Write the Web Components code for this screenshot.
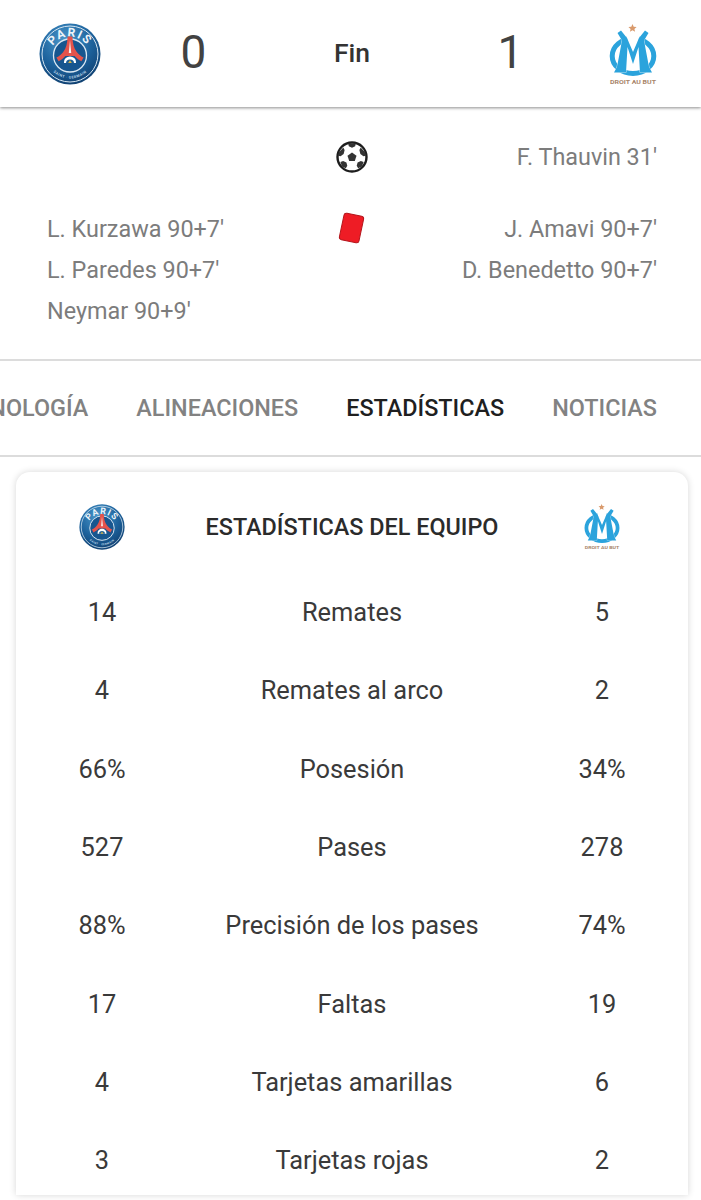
<!DOCTYPE html>
<html lang="es">
<head>
<meta charset="utf-8">
<title>PSG - OM</title>
<style>
	html, body { margin: 0; padding: 0; background: #fff; }
	body { width: 701px; height: 1200px; overflow: hidden; font-family: Roboto, "Liberation Sans", sans-serif; }
</style>
</head>
<body>
<match-page></match-page>

<script>
class PsgLogo extends HTMLElement {
	connectedCallback() {
		const size = this.getAttribute("size") || 62;
		this.attachShadow({ mode: "open" }).innerHTML = `
		<style>:host { display: block; width: ${size}px; height: ${size}px; } svg { display: block; }</style>
		<svg width="${size}" height="${size}" viewBox="0 0 62 62">
			<defs>
				<radialGradient id="b" cx="42%" cy="28%" r="80%">
					<stop offset="0" stop-color="#4a98cc"/>
					<stop offset="0.55" stop-color="#1d629c"/>
					<stop offset="1" stop-color="#0e3a69"/>
				</radialGradient>
				<path id="top" d="M10.500 34 A20.500 20.500 0 0 1 51.500 34"/>
				<path id="bottom" d="M7 36 A24.500 24.500 0 0 0 55 36"/>
			</defs>
			<circle cx="31" cy="31" r="30.500" fill="url(#b)"/>
			<circle cx="31" cy="31" r="28" fill="none" stroke="#d6e6f2" stroke-width="1"/>
			<text font-family="Roboto, sans-serif" font-weight="700" font-size="12" fill="#eef4f9" letter-spacing="1.500"><textPath href="#top" startOffset="50%" text-anchor="middle">PARIS</textPath></text>
			<text font-family="Roboto, sans-serif" font-weight="700" font-size="3.600" fill="#bcd6e8" letter-spacing=".5"><textPath href="#bottom" startOffset="50%" text-anchor="middle">SAINT · GERMAIN</textPath></text>
			<circle cx="31" cy="32.500" r="16.500" fill="#17568f" stroke="#dbe8f3" stroke-width="1.300"/>
			<path d="M28.600 13.500 h4.800 c.2 6.500 1.400 11.500 4.200 15.200 c1.800 2.400 4.200 4.400 7 5.800 l-2.200 3.800 c-2.600-1.200-5-3-6.800-5.200 h-9.200 c-1.800 2.200-4.200 4-6.800 5.200 l-2.200-3.800 c2.800-1.400 5.200-3.400 7-5.800 c2.800-3.700 4-8.700 4.200-15.200z" fill="#e4534b"/>
			<path d="M31 17 l1.200 13 h-2.400z" fill="#f4f4f4"/>
			<path d="M25 39 a6 5.500 0 0 1 12 0 v1 h-12z" fill="#fff"/>
			<path d="M27 40 a4 3.600 0 0 1 8 0 z" fill="#1c5f98"/>
			<path d="M31 37.200 l1.900 2.800 h-3.800z" fill="#d8b23f"/>
		</svg>`;
	}
}

class OmLogo extends HTMLElement {
	connectedCallback() {
		const width = this.getAttribute("width") || 48;
		const height = this.getAttribute("height") || 62;
		this.attachShadow({ mode: "open" }).innerHTML = `
		<style>:host { display: block; width: ${width}px; height: ${height}px; } svg { display: block; }</style>
		<svg width="${width}" height="${height}" viewBox="0 0 48 62">
			<path d="M23.500 1 l1.200 2.700 2.900.3 -2.200 1.900 .7 2.900 -2.600-1.500 -2.600 1.500 .7-2.900 -2.200-1.900 2.900-.3z" fill="#d99a6c"/>
			<ellipse cx="24" cy="33" rx="20.800" ry="17.500" fill="none" stroke="#2ba3dc" stroke-width="5"/>
			<path d="M18 11.500 H30 V15 L24 31 L18 15z" fill="#fff"/>
			<path d="M8.500 10 L12 7.500 L18 15 L24 29 L30 15 L36 7.500 L39.500 10 L35 17.500 L40 44 L43 49.500 H31 L29.500 24 L24 41 L18.500 24 L17 49.500 H5 L8 44 L13 17.500z" fill="#2ba3dc" stroke="#fff" stroke-width=".7" paint-order="stroke"/>
			<text x="24" y="60.500" text-anchor="middle" font-family="Roboto, sans-serif" font-weight="700" font-size="5.800" fill="#a8856a" textLength="46" lengthAdjust="spacingAndGlyphs">DROIT AU BUT</text>
		</svg>`;
	}
}

class SoccerBall extends HTMLElement {
	connectedCallback() {
		this.attachShadow({ mode: "open" }).innerHTML = `
		<style>:host { display: block; width: 32px; height: 32px; flex: none; } svg { display: block; }</style>
		<svg width="32" height="32" viewBox="0 0 32 32">
			<circle cx="16" cy="16" r="14.500" fill="#fff" stroke="#1d1d1d" stroke-width="2.400"/>
			<g fill="#333">
				<path d="M16 11.500 l4.500 3.200 -1.700 5.300 h-5.600 l-1.700-5.300z"/>
				<path d="M12.200 2.500 h7.600 l-.6 2.700 -3.200 1.600 -3.200-1.600z"/>
				<path d="M2.800 11.500 l4.500-5 1.300 2.600 -1 3.800 -3 2.400 -2.600-.5z"/>
				<path d="M29.200 11.500 l-4.500-5 -1.300 2.600 1 3.800 3 2.400 2.600-.5z"/>
				<path d="M6 25.500 l-1.600-4.500 2.700-1 3.300 1.400 .9 3.300 -1.500 2.600z"/>
				<path d="M26 25.500 l1.600-4.500 -2.700-1 -3.300 1.400 -.9 3.300 1.500 2.600z"/>
			</g>
		</svg>`;
	}
}

class RedCard extends HTMLElement {
	connectedCallback() {
		this.attachShadow({ mode: "open" }).innerHTML = `
		<style>
			:host { display: block; width: 32px; height: 28px; margin-top: -3px; margin-left: -1px; flex: none; }
			div {
				width: 21px; height: 28px; margin: 0 5.500px;
				box-sizing: border-box;
				background: #ee1c25;
				border: 1px solid #b5161c;
				border-radius: 3px;
				transform: rotate(12deg);
			}
		</style>
		<div></div>`;
	}
}

class ScoreHeader extends HTMLElement {
	constructor() {
		super();
		this.attachShadow({ mode: "open" }).innerHTML = `
		<style>
			:host {
				display: grid;
				grid-template-columns: 141px 105px 212px 105px 1fr;
				align-items: center;
				position: relative;
				height: 107px;
				background: #fff;
				box-shadow: 0 1px 3px rgba(0, 0, 0, .45);
			}
			.home { padding-left: 39px; }
			.away { padding-left: 46px; }
			.score { text-align: center; font-size: 46px; font-weight: 400; color: #424242; margin-top: -3px; }
			.status { text-align: center; font-size: 26.500px; font-weight: 500; color: #333; margin-top: -3px; }
		</style>
		<div class="home"><psg-logo></psg-logo></div>
		<div class="score">0</div>
		<div class="status">Fin</div>
		<div class="score">1</div>
		<div class="away"><om-logo></om-logo></div>`;
	}
}

class EventRow extends HTMLElement {
	constructor() {
		super();
		this.attachShadow({ mode: "open" }).innerHTML = `
		<style>
			:host {
				display: grid;
				grid-template-columns: 1fr 32px 1fr;
				column-gap: 16px;
				padding: 0 44px 0 47px;
			}
			.side { display: flex; flex-direction: column; gap: 13px; font-size: 23.400px; line-height: 28px; color: #7c7c7c; }
			.away { text-align: right; }
			.icon { display: flex; justify-content: center; align-items: center; height: 28px; }
		</style>
		<div class="side"><slot name="home"></slot></div>
		<div class="icon"><slot name="icon"></slot></div>
		<div class="side away"><slot name="away"></slot></div>`;
	}
}

class MatchTabs extends HTMLElement {
	constructor() {
		super();
		this.attachShadow({ mode: "open" }).innerHTML = `
		<style>
			:host {
				display: flex;
				justify-content: flex-end;
				align-items: center;
				gap: 48px;
				height: 94px;
				padding-right: 44px;
				overflow: hidden;
				border-top: 2px solid #dcdcdc;
				border-bottom: 2px solid #dcdcdc;
				font-size: 23.400px;
				font-weight: 500;
				color: #828282;
				white-space: nowrap;
			}
			span { flex: none; }
			.active { color: #1f1f1f; }
		</style>
		<span>CRONOLOGÍA</span>
		<span>ALINEACIONES</span>
		<span class="active">ESTADÍSTICAS</span>
		<span>NOTICIAS</span>`;
	}
}

class StatRow extends HTMLElement {
	constructor() {
		super();
		this.attachShadow({ mode: "open" }).innerHTML = `
		<style>
			:host {
				display: grid;
				grid-template-columns: 172px 1fr 172px;
				align-items: center;
				height: 78.300px;
				font-size: 25.400px;
				color: #3a3a3a;
				text-align: center;
			}
		</style>
		<div></div><div></div><div></div>`;
	}
	connectedCallback() {
		const cells = this.shadowRoot.querySelectorAll("div");
		cells[0].textContent = this.getAttribute("home");
		cells[1].textContent = this.getAttribute("label");
		cells[2].textContent = this.getAttribute("away");
	}
}

class StatsCard extends HTMLElement {
	constructor() {
		super();
		this.attachShadow({ mode: "open" }).innerHTML = `
		<style>
			:host {
				display: block;
				height: 723px;
				margin: 15px 13px 0 16px;
				background: #fff;
				border-radius: 14px 14px 0 0;
				box-shadow: 0 0 7px rgba(0, 0, 0, .16);
			}
			.head {
				display: grid;
				grid-template-columns: 172px 1fr 172px;
				align-items: center;
				height: 101px;
				padding-top: 8px;
				box-sizing: border-box;
			}
			.logo { display: flex; justify-content: center; }
			h2 { margin: 0; text-align: center; font-size: 23.400px; font-weight: 500; color: #2b2b2b; white-space: nowrap; }
		</style>
		<div class="head">
			<div class="logo"><psg-logo size="46"></psg-logo></div>
			<h2>ESTADÍSTICAS DEL EQUIPO</h2>
			<div class="logo"><om-logo width="36" height="47"></om-logo></div>
		</div>
		<slot></slot>`;
	}
}

class MatchPage extends HTMLElement {
	constructor() {
		super();
		this.attachShadow({ mode: "open" }).innerHTML = `
		<style>
			:host { display: block; height: 1200px; overflow: hidden; }
			.events { display: flex; flex-direction: column; gap: 44px; height: 252px; box-sizing: border-box; padding-top: 36px; }
		</style>
		<score-header></score-header>
		<div class="events">
			<event-row>
				<soccer-ball slot="icon"></soccer-ball>
				<div slot="away">F. Thauvin 31'</div>
			</event-row>
			<event-row>
				<div slot="home">L. Kurzawa 90+7'</div>
				<div slot="home">L. Paredes 90+7'</div>
				<div slot="home">Neymar 90+9'</div>
				<red-card slot="icon"></red-card>
				<div slot="away">J. Amavi 90+7'</div>
				<div slot="away">D. Benedetto 90+7'</div>
			</event-row>
		</div>
		<match-tabs></match-tabs>
		<stats-card>
			<stat-row home="14" label="Remates" away="5"></stat-row>
			<stat-row home="4" label="Remates al arco" away="2"></stat-row>
			<stat-row home="66%" label="Posesión" away="34%"></stat-row>
			<stat-row home="527" label="Pases" away="278"></stat-row>
			<stat-row home="88%" label="Precisión de los pases" away="74%"></stat-row>
			<stat-row home="17" label="Faltas" away="19"></stat-row>
			<stat-row home="4" label="Tarjetas amarillas" away="6"></stat-row>
			<stat-row home="3" label="Tarjetas rojas" away="2"></stat-row>
		</stats-card>`;
	}
}

customElements.define("psg-logo", PsgLogo);
customElements.define("om-logo", OmLogo);
customElements.define("soccer-ball", SoccerBall);
customElements.define("red-card", RedCard);
customElements.define("score-header", ScoreHeader);
customElements.define("event-row", EventRow);
customElements.define("match-tabs", MatchTabs);
customElements.define("stat-row", StatRow);
customElements.define("stats-card", StatsCard);
customElements.define("match-page", MatchPage);
</script>
</body>
</html>
